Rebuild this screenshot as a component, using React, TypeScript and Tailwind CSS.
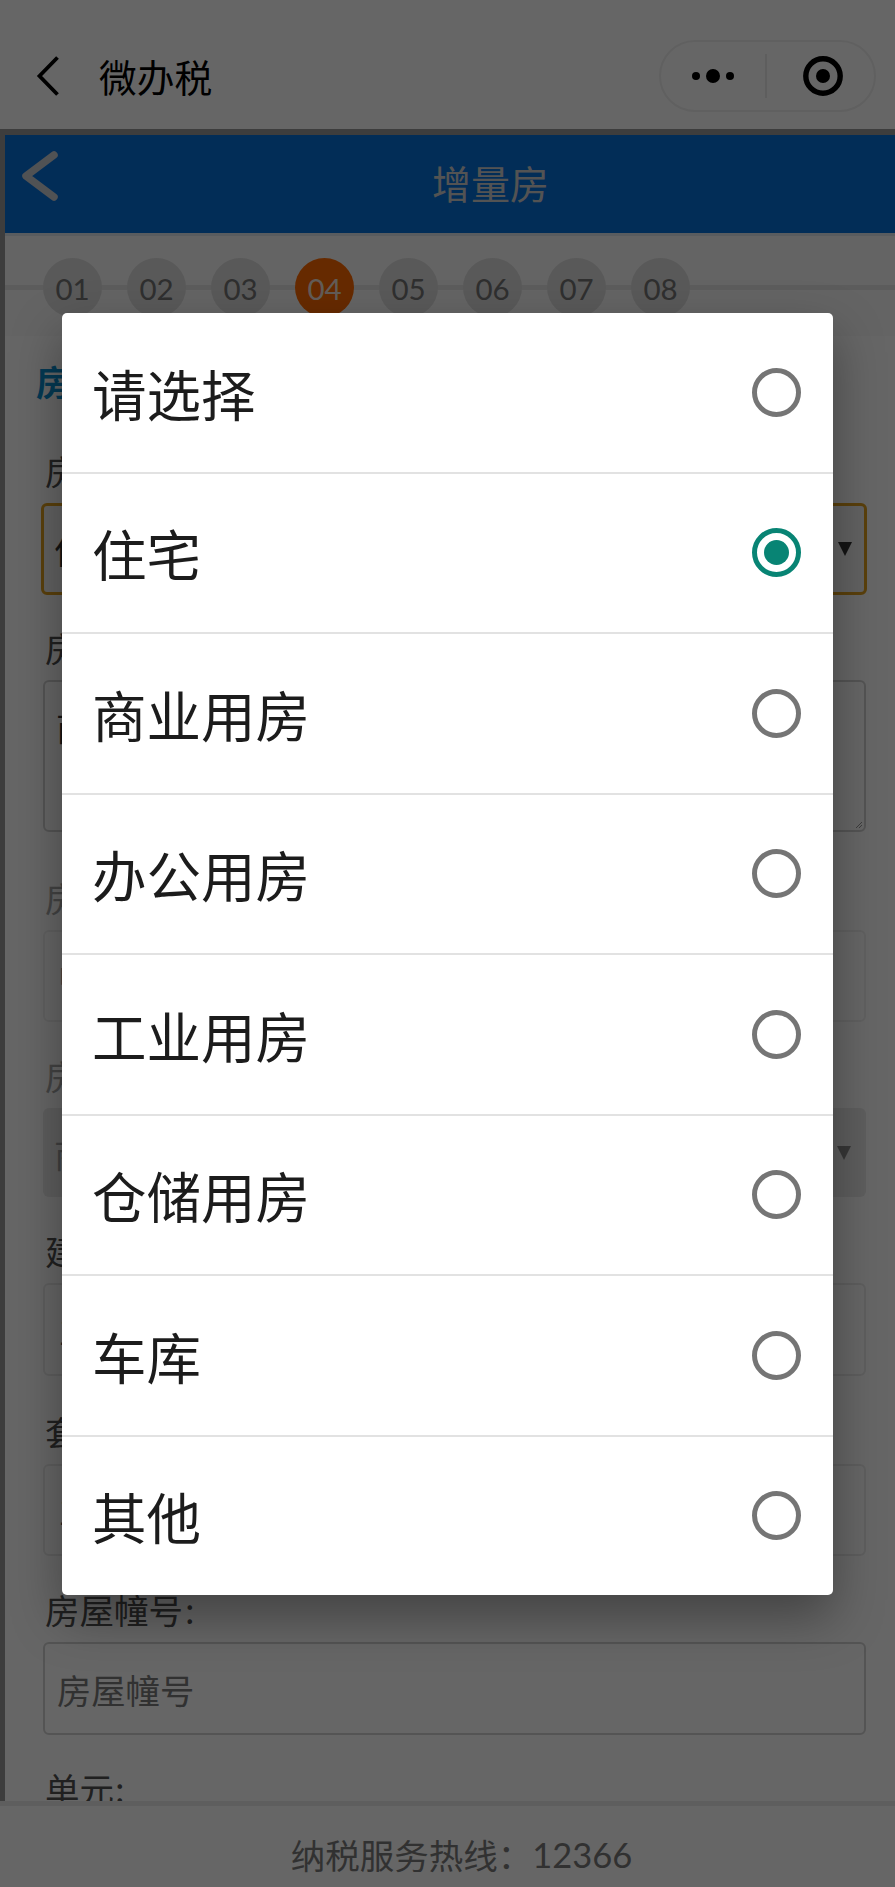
import clsx from "clsx";

const steps = ["01", "02", "03", "04", "05", "06", "07", "08"];

const options = [
    "请选择",
    "住宅",
    "商业用房",
    "办公用房",
    "工业用房",
    "仓储用房",
    "车库",
    "其他",
];

const selected = "住宅";

function CapsuleMenu() {
    return (
        <div className="flex h-[72px] w-[217px] items-center rounded-full border-2 border-[#f0f0f0]">
            <div className="flex flex-1 items-center justify-center gap-[6px] pr-[1px]">
                <span className="size-2 rounded-full bg-black" />
                <span className="size-[14px] rounded-full bg-black" />
                <span className="size-2 rounded-full bg-black" />
            </div>
            <div className="h-[44px] w-[2px] bg-[#ececec]" />
            <div className="flex flex-1 items-center justify-center pl-[4px]">
                <svg width="40" height="40" viewBox="0 0 40 40">
                    <circle cx="20" cy="20" r="17.2" fill="none" stroke="#000" strokeWidth="5.4" />
                    <circle cx="20" cy="20" r="7" fill="#000" />
                </svg>
            </div>
        </div>
    );
}

function TopBar() {
    return (
        <header className="flex h-[129px] shrink-0 items-center justify-between pt-[22px] pr-[19px] pl-[35px]">
            <div className="flex items-center">
                <svg width="24" height="40" viewBox="0 0 24 40" fill="none" stroke="#000" strokeWidth="3.8">
                    <path d="M22.5 1.5 L4.5 20 L22.5 38.5" />
                </svg>
                <h1 className="ml-[40px] text-[37.7px] leading-[48px] text-black">微办税</h1>
            </div>
            <CapsuleMenu />
        </header>
    );
}

function Steps() {
    return (
        <div className="relative h-[100px] bg-[#fafafa] pt-[22px] pl-[38px]">
            <div className="absolute top-[49px] right-0 left-0 h-[5px] bg-[#e6e6e6]" />
            <div className="relative flex gap-[25px]">
                {steps.map((step) => (
                    <div
                        key={step}
                        className={clsx(
                            "flex size-[59px] items-center justify-center rounded-full pt-[3px] font-['Lato'] text-[29.5px]",
                            step === "04" ? "bg-[#ff6a00] text-[#f5e6dc]" : "bg-[#dedede] text-[#757575]"
                        )}
                    >
                        {step}
                    </div>
                ))}
            </div>
        </div>
    );
}

interface FieldProps {
    label: string;
    value?: string;
    className: string;
    boxClass: string;
    colon?: boolean;
    disabled?: boolean;
    arrow?: boolean;
    grip?: boolean;
}

function Field({ label, value, className, boxClass, colon, disabled, arrow, grip }: FieldProps) {
    return (
        <div className={className}>
            <div className={clsx("mb-[9px] ml-[2px] h-[48px] text-[34.5px] leading-[48px]", disabled ? "text-[#a8a8a8]" : "text-[#505050]")}>
                {label}
                {colon && <span className="ml-[2px]">:</span>}
            </div>
            <div className={clsx("relative flex rounded-[6px] text-[34.3px] leading-[48px]", boxClass)}>
                {value}
                {arrow && (
                    <svg className={clsx("absolute top-1/2 -mt-[7px]", disabled ? "right-[15px]" : "right-[12px]")} width="14" height="14" viewBox="0 0 14 14">
                        <path d="M0 0 H14 L7 14 Z" fill={disabled ? "#8a8a8a" : "#333"} />
                    </svg>
                )}
                {grip && (
                    <svg className="absolute right-[1px] bottom-[1px]" width="8" height="8" viewBox="0 0 8 8" stroke="#999">
                        <path d="M1 7 L7 1 M4 7 L7 4" />
                    </svg>
                )}
            </div>
        </div>
    );
}

function HouseForm() {
    return (
        <div className="pr-[29px] pl-[38px]">
            <h3 className="mt-[20px] h-[50px] -ml-[7px] text-[35px] leading-[50px] font-bold text-[#0a90d0]">房</h3>
            <Field
                label="房"
                value="住宅"
                arrow
                className="mt-[40px]"
                boxClass="-mr-px -ml-[2px] h-[92px] items-center border-[3px] border-[#e0a020] bg-[#f4f4f4] pl-[10px] text-[#333]"
            />
            <Field label="房" value="商" grip className="mt-[28px]" boxClass="h-[152px] border-2 border-[#d2d2d2] pt-[20px] pl-[11px] text-[#333]" />
            <Field label="房" value="中" disabled className="mt-[41px]" boxClass="h-[92px] items-center border-2 border-[#f0f0f0] pl-[13px] text-[#999]" />
            <Field label="房" value="商" disabled arrow className="mt-[29px]" boxClass="h-[89px] items-center bg-[#ebebeb] pl-[11px] text-[#a0a0a0]" />
            <Field label="建" value="1" className="mt-[29px]" boxClass="h-[93px] items-center border-2 border-[#ececec] pl-[13px] text-[#555]" />
            <Field label="套" value="1" className="mt-[31px]" boxClass="h-[92px] items-center border-2 border-[#ececec] pl-[13px] text-[#555]" />
            <Field label="房屋幢号" colon value="房屋幢号" className="mt-[29px]" boxClass="h-[93px] items-center border-2 border-[#d2d2d2] pl-[12px] text-[#7c7c7c]" />
            <div className="mt-[29px] ml-[2px] text-[34.5px] leading-[48px] text-[#505050]">
                单元<span className="ml-[1px]">:</span>
            </div>
        </div>
    );
}

function Radio({ checked }: { checked: boolean }) {
    return (
        <span
            className={clsx(
                "flex size-[49px] items-center justify-center rounded-full border-[5px]",
                checked ? "border-[#088474]" : "border-[#757575]"
            )}
        >
            {checked && <span className="size-[25px] rounded-full bg-[#088474]" />}
        </span>
    );
}

function OptionDialog() {
    return (
        <ul className="mx-auto mt-[313px] flex h-[1282px] w-[771px] flex-col divide-y-2 divide-[#e2e2e2] rounded-[5px] bg-white shadow-[0_22px_50px_rgba(0,0,0,0.35)]">
            {options.map((option) => (
                <li key={option} className="flex flex-1 items-center justify-between pr-[32px] pl-[30px]">
                    <span className="pt-px text-[54.5px] leading-[72px] text-[#1c1c1c]">{option}</span>
                    <Radio checked={option === selected} />
                </li>
            ))}
        </ul>
    );
}

function App() {
    return (
        <div className="relative flex h-[1887px] w-[895px] flex-col overflow-hidden bg-white font-['Noto_Sans_CJK_SC',sans-serif]">
            <TopBar />
            <main className="h-[1672px] shrink-0 overflow-hidden border-t-[6px] border-l-[5px] border-[#999]">
                <div className="flex h-[98px] items-center bg-[#0671da] pl-[15px] text-[#d0d0d0]">
                    <svg className="-mt-[16px] shrink-0" width="40" height="52" viewBox="0 0 40 52" fill="none" stroke="#c8ccd2" strokeWidth="7.5" strokeLinecap="round" strokeLinejoin="round">
                        <path d="M34 5 L6 26 L34 47" />
                    </svg>
                    <h2 className="flex-1 pb-[5px] pl-[26px] text-center text-[39px] leading-[50px]">增量房</h2>
                </div>
                <div className="h-[3px] bg-[#dfe6ee]" />
                <Steps />
                <HouseForm />
            </main>
            <footer className="flex flex-1 items-center justify-center border-t-[5px] border-[#ebebeb] pt-[14px] pl-[28px] text-[34.5px] leading-[50px] text-[#7c7c7c]">
                纳税服务热线：<span className="pt-[2px] font-['Lato']">12366</span>
            </footer>
            <div className="absolute inset-0 bg-black/60">
                <div className="flex">
                    <OptionDialog />
                </div>
            </div>
        </div>
    );
}

export default App;
